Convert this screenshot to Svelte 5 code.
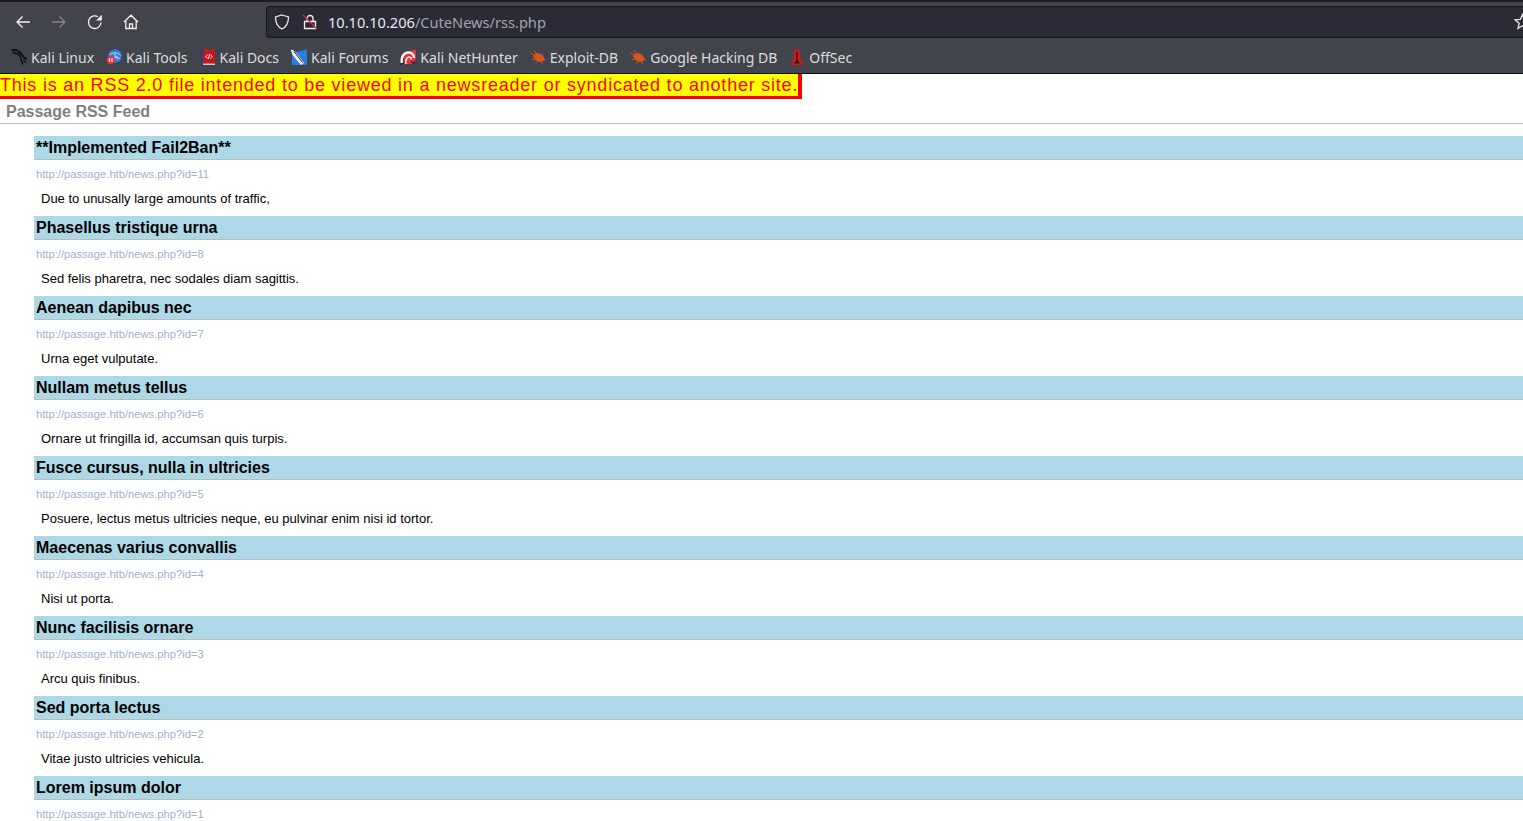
<script>
  const bookmarks = [
    { name: 'Kali Linux', icon: 'dragon' },
    { name: 'Kali Tools', icon: 'tools' },
    { name: 'Kali Docs', icon: 'docs' },
    { name: 'Kali Forums', icon: 'forums' },
    { name: 'Kali NetHunter', icon: 'hunter' },
    { name: 'Exploit-DB', icon: 'bug' },
    { name: 'Google Hacking DB', icon: 'bug' },
    { name: 'OffSec', icon: 'offsec' }
  ];

  const items = [
    { title: '**Implemented Fail2Ban**', id: 11, text: 'Due to unusally large amounts of traffic,' },
    { title: 'Phasellus tristique urna', id: 8, text: 'Sed felis pharetra, nec sodales diam sagittis.' },
    { title: 'Aenean dapibus nec', id: 7, text: 'Urna eget vulputate.' },
    { title: 'Nullam metus tellus', id: 6, text: 'Ornare ut fringilla id, accumsan quis turpis.' },
    { title: 'Fusce cursus, nulla in ultricies', id: 5, text: 'Posuere, lectus metus ultricies neque, eu pulvinar enim nisi id tortor.' },
    { title: 'Maecenas varius convallis', id: 4, text: 'Nisi ut porta.' },
    { title: 'Nunc facilisis ornare', id: 3, text: 'Arcu quis finibus.' },
    { title: 'Sed porta lectus', id: 2, text: 'Vitae justo ultricies vehicula.' },
    { title: 'Lorem ipsum dolor', id: 1, text: '' }
  ];
</script>

<div class="page">
  <header class="browser">
    <div class="toolbar">
      <div class="nav">
        <svg class="navicon" viewBox="0 0 16 16"><path d="M15 8H2M7.5 2.5 2 8l5.500 5.500" /></svg>
        <svg class="navicon off" viewBox="0 0 16 16"><path d="M1 8h13M8.500 2.500 14 8l-5.500 5.500" /></svg>
        <svg class="navicon" viewBox="0 0 16 16"><path d="M14 8.500A6.300 6.300 0 1 1 11 2.800" /><path class="fill" d="M14.800 0.800v5.700H9.100z" /></svg>
        <svg class="navicon" viewBox="0 0 16 16"><path d="M1 8 8 1.200 15 8M2.800 6.500V14.500H13.200V6.500M6.500 14.500V10h3v4.500" /></svg>
      </div>
      <div class="urlbar">
        <svg class="shield" viewBox="0 0 16 16"><path d="M8 1 14.500 3c0 6-1.500 9.500-6.500 12C3 12.500 1.500 9 1.500 3z" /></svg>
        <svg class="lock" viewBox="0 0 16 16">
          <path d="M5 7V4.500a3 3 0 0 1 6 0V7M2.500 7.500h11v7h-11z" />
          <path class="slash" d="M1 1l14 14" />
        </svg>
        <span class="url"><span class="host">10.10.10.206</span>/CuteNews/rss.php</span>
        <svg class="star" viewBox="0 0 16 16"><path d="M8 1.500 10 6l4.800.500-3.600 3.200 1 4.800L8 12l-4.200 2.500 1-4.800L1.200 6.500 6 6z" /></svg>
      </div>
    </div>
    <div class="bookmarks">
      {#each bookmarks as b}
        <div class="bookmark">
          <svg class="favicon" viewBox="0 0 16 16">
            {#if b.icon === 'dragon'}
              <path d="M0.500 1.500C3 0.500 6 1 8 2.500c3 2.200 3.500 5 5.500 6.500 1 .8 1.800 1 2.200 1" fill="none" stroke="#0b0b0b" stroke-width="1.800" />
              <path d="M3 4.500C6 3.500 8.500 6 9.500 8c1 2.200.5 4 2.500 7.500" fill="none" stroke="#0b0b0b" stroke-width="1.500" />
              <path d="M1 3.500l3-.5M12 11.500c1.500 0 2.500.8 3 2" fill="none" stroke="#0b0b0b" stroke-width="1.100" />
            {:else if b.icon === 'tools'}
              <circle cx="9" cy="7" r="6.800" fill="#2f7fe0" />
              <path d="M3.500 6c3-3 8-3 11 .5M7 9c2-1.500 5-1.300 7 .8M8 4.500l4 6" fill="none" stroke="#e8f0fb" stroke-width="0.800" />
              <circle cx="4.800" cy="11" r="4.200" fill="#e8323c" />
              <path d="M3.500 9.300v3.500M6 9.300v3.500" stroke="#fff" stroke-width="1.200" />
            {:else if b.icon === 'docs'}
              <rect x="2" y="0.500" width="13" height="14" fill="#c4161c" />
              <rect x="1" y="0.500" width="2" height="15.500" fill="#2c3d80" />
              <path d="M7.500 5.500 5.800 7.500 7.500 9.500M10.500 5.500l1.700 2-1.700 2M9.500 5 8.500 10" fill="none" stroke="#fff" stroke-width="0.900" />
              <rect x="3" y="14.500" width="12" height="1.500" fill="#c9c9c9" />
            {:else if b.icon === 'forums'}
              <path d="M1 4 16 0.500V16H1z" fill="#2a7de1" />
              <path d="M0 0.500c3 .5 5 3 7 5.500l6 8-3 2-6-7C2 7 0 4 0 0.500z" fill="#f4f4f4" />
              <path d="M3 2.500l8.500 11" stroke="#1c1c1c" stroke-width="1" />
            {:else if b.icon === 'hunter'}
              <path d="M4 3.500 16 0.500V10l-4 5H4z" fill="#e8323c" />
              <path d="M2 14c-1.500-6 2-10.500 6.500-10.500 3.500 0 5.500 2.500 5.500 5.500" fill="none" stroke="#f4f4f4" stroke-width="2.400" />
              <path d="M6 15c-1-3.500 1-7 3-7 1.300 0 2.300 1 2.300 2.500" fill="none" stroke="#f4f4f4" stroke-width="1.600" />
              <path d="M0.500 15.500l3.500-1.500M11 12.500l3.500 2" stroke="#1c1c1c" stroke-width="1.200" />
            {:else if b.icon === 'bug'}
              <ellipse cx="8.800" cy="8.500" rx="5.800" ry="4" fill="#d9541e" transform="rotate(25 8.800 8.500)" />
              <path d="M0.500 4l4 2.500M3.500 1l3.500 4M1.500 11l4.500-1.500M6 14.500l2.500-3M12.500 15l-1.500-3.500M15.500 11l-3-1.500" stroke="#d9541e" stroke-width="1" />
            {:else}
              <path d="M5.500 0.500h5l1 9.500 2 4v2h-11v-2l2-4z" fill="#d3161c" />
              <path d="M7.300 3h1.400v8l2 3.500H5.300l2-3.500z" fill="#1a1a1a" />
            {/if}
          </svg>
          <span>{b.name}</span>
        </div>
      {/each}
    </div>
  </header>

  <main class="feed">
    <div class="notice">This is an RSS 2.0 file intended to be viewed in a newsreader or syndicated to another site.</div>
    <h2 class="channel">Passage RSS Feed</h2>
    <ul class="items">
      {#each items as item}
        <li class="item">
          <h3>{item.title}</h3>
          <a href="#top">http://passage.htb/news.php?id={item.id}</a>
          {#if item.text}<p>{item.text}</p>{/if}
        </li>
      {/each}
    </ul>
  </main>
</div>

<style>
  :global(body) {
    margin: 0;
    background: #fff;
    overflow: hidden;
  }

  .page {
    height: 821px;
    overflow: hidden;
    font-family: "Liberation Sans", Arial, sans-serif;
  }

  .browser {
    background: #42444c;
    border-top: 2px solid #1c1b22;
    border-bottom: 1px solid #0c0c0d;
    height: 71px;
    font-family: "Noto Sans", sans-serif;
  }

  .toolbar {
    display: flex;
    align-items: center;
    height: 36px;
    padding-left: 15px;
    box-sizing: border-box;
  }

  .nav {
    display: flex;
    gap: 20px;
    width: 251px;
    margin-top: 4px;
  }

  .navicon {
    width: 16px;
    height: 16px;
    fill: none;
    stroke: #f2f2f3;
    stroke-width: 1.300;
  }

  .navicon.off {
    stroke: #85868b;
  }

  .navicon .fill {
    fill: #f2f2f3;
    stroke: none;
  }

  .urlbar {
    display: flex;
    align-items: center;
    flex: 1;
    height: 32px;
    margin-top: 4px;
    padding-left: 7px;
    background: #2a2b36;
    border: 1px solid #17171c;
    border-right: none;
    border-radius: 4px 0 0 4px;
    position: relative;
    box-sizing: border-box;
  }

  .shield {
    width: 16px;
    height: 16px;
    fill: none;
    stroke: #e6e6e8;
    stroke-width: 1.300;
  }

  .lock {
    width: 16px;
    height: 16px;
    margin-left: 12px;
    fill: none;
    stroke: #f0f0f2;
    stroke-width: 1.300;
  }

  .lock .slash {
    stroke: #e22850;
  }

  .url {
    margin-left: 10px;
    margin-top: -1px;
    font-size: 14.6px;
    color: #a3a4aa;
  }

  .host {
    color: #e8e8ea;
  }

  .star {
    position: absolute;
    right: -8px;
    top: 6px;
    width: 17px;
    height: 17px;
    fill: none;
    stroke: #e6e6e8;
    stroke-width: 1.300;
  }

  .bookmarks {
    display: flex;
    align-items: center;
    height: 33px;
    padding: 5px 0 0 11px;
    box-sizing: border-box;
    gap: 12px;
  }

  .bookmark {
    display: flex;
    align-items: center;
    gap: 4px;
    font-size: 14px;
    color: #dcdcde;
  }

  .favicon {
    width: 16px;
    height: 16px;
    flex: none;
  }

  .notice {
    display: inline-block;
    font-size: 18px;
    line-height: 22px;
    letter-spacing: 0.78px;
    color: #f00;
    background: #ff0;
    border: solid #f00;
    border-width: 0 4px 3px 0;
    vertical-align: top;
  }

  .channel {
    margin: 1px 0 0;
    padding: 2px 0 0 6px;
    height: 21px;
    font-size: 16px;
    line-height: 20px;
    color: #808080;
    border-bottom: 1px solid #bbb;
  }

  .items {
    list-style: none;
    margin: 12px 0 0 34px;
    padding: 0;
  }

  .item {
    height: 80px;
  }

  .item h3 {
    margin: 0;
    padding-left: 2px;
    height: 23px;
    font-size: 16px;
    line-height: 23px;
    color: #000;
    background: #add8e6;
    border-bottom: 1px solid #bbb;
  }

  .item a {
    display: block;
    margin: 8px 0 0 2px;
    font-size: 11.2px;
    line-height: 13px;
    color: #a0b2cc;
    text-decoration: none;
  }

  .item p {
    margin: 10px 0 0 7px;
    font-size: 13px;
    line-height: 15px;
    color: #000;
  }
</style>
